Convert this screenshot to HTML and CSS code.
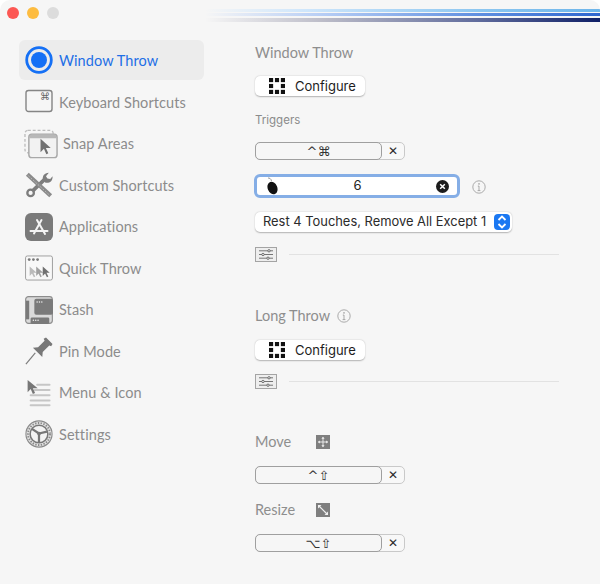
FILE: index.html
```html
<!DOCTYPE html>
<html lang="en">
<head>
<meta charset="utf-8">
<title>Window Throw</title>
<link rel="stylesheet" href="styles.css">
</head>
<body>
<svg class="defs" width="0" height="0" aria-hidden="true">
  <defs>
    <symbol id="grid" viewBox="0 0 17 17">
      <g fill="#111">
        <rect x="0" y="0" width="4.4" height="4.4"/><rect x="6.3" y="0" width="4.4" height="4.4"/><rect x="12.6" y="0" width="4.4" height="4.4"/>
        <rect x="0" y="6.3" width="4.4" height="4.4"/><rect x="12.6" y="6.3" width="4.4" height="4.4"/>
        <rect x="0" y="12.6" width="4.4" height="4.4"/><rect x="6.3" y="12.6" width="4.4" height="4.4"/><rect x="12.6" y="12.6" width="4.4" height="4.4"/>
      </g>
    </symbol>
    <symbol id="sliders" viewBox="0 0 22 15">
      <rect x="0.5" y="0.5" width="21" height="14" fill="#eeeeee" stroke="#a4a4a4"/>
      <g stroke="#555" stroke-width="0.8" fill="#eee">
        <path d="M4 3.8H18M4 7.5H18M4 11.2H18" fill="none"/>
        <circle cx="14" cy="3.8" r="1.2"/><circle cx="8" cy="7.5" r="1.2"/><circle cx="13" cy="11.2" r="1.2"/>
      </g>
    </symbol>
    <symbol id="info" viewBox="0 0 14 14">
      <circle cx="7" cy="7" r="6.2" fill="none" stroke="#a2a2a2" stroke-width="0.9"/>
      <path d="M7 6V10.6M5.8 6.1H7M5.6 10.6H8.4" stroke="#a2a2a2" fill="none" stroke-width="0.9"/>
      <circle cx="7" cy="3.9" r="0.8" fill="#a2a2a2"/>
    </symbol>
  </defs>
</svg>
<div class="window">
  <header class="titlebar">
    <div class="lights">
      <span class="light red"></span><span class="light yellow"></span><span class="light grey"></span>
    </div>
    <div class="stripes">
      <span class="stripe s1"></span><span class="stripe s2"></span><span class="stripe s3"></span>
    </div>
  </header>
  <div class="content">
    <nav class="sidebar">
      <a class="item active">
        <svg class="ico" viewBox="0 0 28 28"><circle cx="14" cy="14" r="12.3" fill="none" stroke="#1570f5" stroke-width="2.8"/><circle cx="14" cy="14" r="8" fill="#1570f5"/></svg>
        <span>Window Throw</span>
      </a>
      <a class="item">
        <svg class="ico" viewBox="0 0 28 28"><rect x="1" y="2.5" width="26" height="21" rx="2.5" fill="none" stroke="#858585" stroke-width="1.4"/><text x="20" y="12" class="cmd">⌘</text></svg>
        <span>Keyboard Shortcuts</span>
      </a>
      <a class="item snap">
        <svg class="ico wide" viewBox="0 0 36 30"><rect x="1" y="1" width="29" height="23" rx="3" fill="none" stroke="#bdbdbd" stroke-width="1.4" stroke-dasharray="3 2"/><rect x="5" y="5" width="29" height="24" rx="3" fill="#f2f2f2" stroke="#a8a8a8" stroke-width="1.5"/><path d="M5.5 8a3 3 0 0 1 3-3h22a3 3 0 0 1 3 3v1h-28z" fill="#b8b8b8"/><path d="M17 9.500v14l3.500-3.500 2.500 5.500 2-1-2.500-5.300h5z" fill="#707070"/></svg>
        <span>Snap Areas</span>
      </a>
      <a class="item">
        <svg class="ico" viewBox="0 0 30 28"><path d="M8 20.500 21 8" stroke="#7d7d7d" stroke-width="4" fill="none"/><circle cx="6" cy="22.500" r="3.500" fill="none" stroke="#7d7d7d" stroke-width="2.500"/><path d="M19.500 9c-1.500-4 1-8 6-8l-3 3.500 1.500 2.500 3 .5 2.500-3c.5 5-3.500 8-7.500 7z" fill="#7d7d7d"/><path d="M1 4 4 1 29 24 26 27z" fill="#8a8a8a"/><path d="M3 3.500 27 25.500" stroke="#d0d0d0" stroke-width="1" stroke-dasharray="1 1.500"/></svg>
        <span>Custom Shortcuts</span>
      </a>
      <a class="item">
        <svg class="ico" viewBox="0 0 28 28"><rect x="0" y="0" width="28" height="28" rx="6" fill="#7a7a7a"/><g stroke="#f4f4f4" stroke-width="2" stroke-linecap="round" fill="none"><path d="M12 7 20 21M16.500 7 9 20.500M5.500 18H22.500"/></g></svg>
        <span>Applications</span>
      </a>
      <a class="item">
        <svg class="ico" viewBox="0 0 30 27"><rect x="0.600" y="0.600" width="28.800" height="25.800" rx="2" fill="#f8f8f8" stroke="#9a9a9a"/><g fill="#7a7a7a"><circle cx="4.500" cy="4.500" r="1.500"/><circle cx="9" cy="4.500" r="1.500"/><circle cx="13.500" cy="4.500" r="1.500"/></g><path d="M5 12v10l2.500-2.500 2 4 1.500-.8-2-4h3.500z" fill="#bbb"/><path d="M12 12v10l2.500-2.500 2 4 1.500-.8-2-4h3.500z" fill="#a0a0a0"/><path d="M19 12v10l2.500-2.500 2 4 1.500-.8-2-4h3.500z" fill="#707070"/></svg>
        <span>Quick Throw</span>
      </a>
      <a class="item">
        <svg class="ico" viewBox="0 0 30 30"><rect x="0.700" y="0.700" width="28.600" height="28.600" rx="3" fill="#dadada" stroke="#8c8c8c" stroke-width="1.200"/><rect x="1" y="5" width="3.500" height="20" fill="#7a7a7a"/><rect x="10" y="3" width="20" height="17" rx="2" fill="#7a7a7a"/><g fill="#eee"><circle cx="13" cy="6.500" r=".8"/><circle cx="15.500" cy="6.500" r=".8"/><circle cx="18" cy="6.500" r=".8"/></g><rect x="6" y="23" width="20" height="7" rx="1.500" fill="#7a7a7a"/><g fill="#eee"><circle cx="9" cy="26" r=".8"/><circle cx="11.500" cy="26" r=".8"/><circle cx="14" cy="26" r=".8"/></g></svg>
        <span>Stash</span>
      </a>
      <a class="item">
        <svg class="ico" viewBox="0 0 30 30"><path d="M1 29 11 17" stroke="#7d7d7d" stroke-width="1.300" fill="none"/><path d="M8.500 11.500 14 11l7-7-1-2 2.500-1.500 7 7L28 10l-2-1-7 7-.5 5.500z" fill="#787878"/></svg>
        <span>Pin Mode</span>
      </a>
      <a class="item">
        <svg class="ico" viewBox="0 0 28 32"><g stroke="#c6c6c6" stroke-width="2.400" stroke-linecap="round"><path d="M12 6.500H26M9 12.500H26M4.500 18.500H26M4.500 24.500H26M4.500 30H26"/></g><path d="M1 1v14l3.500-3.500 2.500 5.500 2.500-1-2.500-5.500h5.500z" fill="#777"/></svg>
        <span>Menu &amp; Icon</span>
      </a>
      <a class="item">
        <svg class="ico" viewBox="0 0 30 30"><circle cx="15" cy="15" r="14" fill="#e2e2e2" stroke="#8a8a8a" stroke-width="1.200"/><circle cx="15" cy="15" r="11.800" fill="none" stroke="#8a8a8a" stroke-width="2" stroke-dasharray="1.500 1.500"/><circle cx="15" cy="15" r="9.500" fill="#f3f3f3" stroke="#777" stroke-width="1.600"/><g stroke="#777" stroke-width="2.400" fill="none"><path d="M15 14.500 7.500 9.500M15 14.500 23.500 12.500M15 14.500V24"/></g><circle cx="15" cy="14.500" r="2" fill="#777"/></svg>
        <span>Settings</span>
      </a>
    </nav>
    <main class="panel">
      <h2 class="heading first">Window Throw</h2>
      <button class="configure"><svg class="grid-ico"><use href="#grid"/></svg><span>Configure</span></button>
      <div class="label triggers">Triggers</div>
      <div class="shortcut gap-a"><span class="keys">^⌘</span><span class="clear">✕</span></div>
      <div class="mouse-row">
        <div class="mouse-field">
          <svg class="mouse" viewBox="0 0 13 18"><path d="M2 1c1.500 0 3 .5 3.500 3" fill="none" stroke="#555" stroke-width=".6"/><ellipse cx="6.500" cy="11" rx="4.800" ry="6.500" transform="rotate(-22 6.500 11)" fill="#111"/></svg>
          <span class="mouse-num">6</span>
          <svg class="x-circle" viewBox="0 0 14 14"><circle cx="7" cy="7" r="7" fill="#1c1c1c"/><path d="M4.500 4.500l5 5M9.500 4.500l-5 5" stroke="#fff" stroke-width="1.600"/></svg>
        </div>
        <svg class="info"><use href="#info"/></svg>
      </div>
      <div class="select">
        <span>Rest 4 Touches, Remove All Except 1</span>
        <span class="stepper"><svg viewBox="0 0 16 18" width="16" height="18"><path d="M4.500 7 8 3.500 11.500 7M4.500 11 8 14.500 11.500 11" fill="none" stroke="#fff" stroke-width="1.800"/></svg></span>
      </div>
      <div class="adv adv-a"><svg class="slider-ico"><use href="#sliders"/></svg><span class="rule"></span></div>
      <h2 class="heading long">Long Throw <svg class="info small"><use href="#info"/></svg></h2>
      <button class="configure second"><svg class="grid-ico"><use href="#grid"/></svg><span>Configure</span></button>
      <div class="adv adv-b"><svg class="slider-ico"><use href="#sliders"/></svg><span class="rule"></span></div>
      <div class="heading-row move">
        <span class="heading-text">Move</span>
        <svg class="tile" viewBox="0 0 14 14"><rect width="14" height="14" fill="#7f7f7f"/><path d="M7 2.500V11.500M2.500 7H11.500" stroke="#f1f1f1" stroke-width=".9"/><path d="M7 1.800 8.600 3.800H5.400zM7 12.200 8.600 10.200H5.400zM1.800 7 3.800 5.400V8.600zM12.200 7 10.200 5.400V8.600z" fill="#f1f1f1"/></svg>
      </div>
      <div class="shortcut gap-b"><span class="keys">^⇧</span><span class="clear">✕</span></div>
      <div class="heading-row resize">
        <span class="heading-text">Resize</span>
        <svg class="tile" viewBox="0 0 14 14"><rect width="14" height="14" fill="#7f7f7f"/><path d="M3 3 11 11" stroke="#f1f1f1" stroke-width="1.100"/><path d="M2 2H5.500L2 5.500zM12 12H8.500L12 8.500z" fill="#f1f1f1"/></svg>
      </div>
      <div class="shortcut gap-b"><span class="keys">⌥⇧</span><span class="clear">✕</span></div>
    </main>
  </div>
</div>
</body>
</html>
```

FILE: styles.css
```css
* { box-sizing: border-box; }
html, body { margin: 0; padding: 0; background: #ffffff; }
body { width: 600px; height: 584px; overflow: hidden; }
.defs { position: absolute; }

.window {
  width: 600px;
  height: 584px;
  background: #f6f6f6;
  border-radius: 10px 10px 0 0;
  overflow: hidden;
  font-family: "Inter", "Liberation Sans", sans-serif;
}

.titlebar {
  height: 26px;
  display: flex;
  justify-content: space-between;
}
.lights { display: flex; gap: 8px; padding: 7px 0 0 7px; }
.light { width: 12px; height: 12px; border-radius: 50%; }
.red { background: #fc5753; }
.yellow { background: #fdbc40; }
.grey { background: #dcdcdc; }

.stripes { width: 395px; height: 13px; margin-top: 9px; display: flex; flex-direction: column; }
.stripe { display: block; }
.s1 { height: 3px; background: linear-gradient(90deg, rgba(200,225,250,0), #cfe6fb 25%, #8cc6f0 70%, #6db5ea); }
.s2 { height: 3px; margin-top: 1px; background: linear-gradient(90deg, rgba(180,200,245,0), #b6cdf5 30%, #5e8ee0 70%, #2f66cf); }
.s3 { height: 4px; margin-top: 2px; background: linear-gradient(90deg, rgba(170,170,180,0), #bcbcc8 30%, #5e6a9c 70%, #0f1f66); }

.content { display: flex; }

.sidebar { width: 236px; padding: 14px 0 0 19px; flex: none; }
.item {
  width: 185px;
  height: 41.5px;
  display: flex;
  align-items: center;
  gap: 6px;
  padding-left: 6px;
  font-family: "Lato", "Liberation Sans", sans-serif;
  font-size: 14.5px;
  letter-spacing: 0.08px;
  color: #8c8c8c;
}
.item.active {
  height: 40px;
  margin-bottom: 1.500px;
  background: #ececec;
  border-radius: 6px;
  color: #1e6fe6;
}
.item.snap { gap: 4px; padding-left: 5px; }
.ico { width: 28px; height: 28px; flex: none; }
.ico.wide { width: 35px; height: 30px; }
.cmd { font-family: "DejaVu Sans", sans-serif; font-size: 10px; fill: #666; text-anchor: middle; }

.panel { flex: 1; padding-left: 19px; color: #8b8b8b; }

.heading {
  margin: 0;
  font-family: "Lato", "Liberation Sans", sans-serif;
  font-size: 14.5px;
  font-weight: 400;
  line-height: 20px;
  color: #8e8e8e;
  display: flex;
  align-items: center;
}
.heading.first { margin-top: 17px; }
.heading.long { margin-top: 44px; gap: 7px; }
.heading-text { font-family: "Lato", "Liberation Sans", sans-serif; font-size: 14.5px; line-height: 20px; color: #8e8e8e; width: 61px; }

.configure {
  display: flex;
  align-items: center;
  gap: 10px;
  width: 110px;
  height: 20px;
  margin: 13px 0 0;
  padding: 0 0 1px 14px;
  border: 0;
  border-radius: 5px;
  background: #ffffff;
  box-shadow: 0 0.5px 1.500px rgba(0,0,0,0.28);
  font-family: "Inter", "Liberation Sans", sans-serif;
  font-size: 13px;
  color: #1d1d1d;
}
.configure.second { margin-top: 14px; }
.grid-ico { width: 16px; height: 16px; flex: none; }

.label { font-size: 11.500px; line-height: 16px; color: #8b8b8b; }
.triggers { margin-top: 16px; }

.shortcut {
  display: flex;
  width: 150px;
  height: 18px;
  border: 1px solid #c9c9c9;
  border-radius: 5px;
  background: #f8f8f8;
}
.gap-a { margin-top: 14px; }
.gap-b { margin-top: 14px; }
.keys {
  width: 127px;
  height: 18px;
  margin: -1px 0 0 -1px;
  display: flex;
  align-items: center;
  justify-content: center;
  border: 1px solid #9f9f9f;
  border-radius: 5px;
  background: #f6f6f6;
  font-family: "DejaVu Sans", sans-serif;
  font-size: 13px;
  color: #333;
}
.clear {
  flex: 1;
  display: flex;
  align-items: center;
  justify-content: center;
  font-family: "DejaVu Sans", sans-serif;
  font-size: 12px;
  color: #2a2a2a;
}

.mouse-row { display: flex; align-items: center; gap: 12px; margin-top: 14px; margin-left: -1px; }
.mouse-row .info { margin-top: 1px; }
.mouse-field {
  width: 206px;
  height: 24px;
  display: flex;
  align-items: center;
  justify-content: space-between;
  padding: 0 8px 0 9px;
  border: 3px solid #85aee6;
  border-radius: 6px;
  background: #ffffff;
}
.mouse { width: 13px; height: 18px; flex: none; }
.mouse-num { font-size: 13px; line-height: 16px; margin-top: -2px; color: #222; }
.x-circle { width: 13px; height: 13px; flex: none; }
.info { width: 14px; height: 14px; flex: none; }
.info.small { width: 14px; height: 14px; }

.select {
  width: 257px;
  height: 20px;
  margin-top: 14px;
  padding: 0 2px 1px 8px;
  display: flex;
  align-items: center;
  justify-content: space-between;
  border-radius: 5px;
  background: #ffffff;
  box-shadow: 0 0.5px 1.500px rgba(0,0,0,0.28);
  font-size: 12.9px;
  color: #2b2b2b;
  white-space: nowrap;
}
.stepper {
  width: 16px;
  height: 16px;
  display: flex;
  align-items: center;
  justify-content: center;
  border-radius: 4px;
  background: #1b78f2;
}

.adv { display: flex; align-items: center; gap: 12px; width: 304px; }
.adv-a { margin-top: 15px; }
.adv-b { margin-top: 14px; }
.slider-ico { width: 22px; height: 15px; flex: none; }
.rule { flex: 1; height: 1px; background: #e2e2e2; }

.heading-row { display: flex; align-items: center; }
.move { margin-top: 43px; }
.resize { margin-top: 16px; }
.tile { width: 14px; height: 14px; flex: none; margin-top: -1px; }
```
